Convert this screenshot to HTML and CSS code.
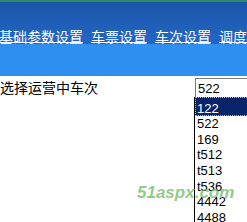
FILE: index.html
```html
<!DOCTYPE html>
<html lang="zh">
<head>
<meta charset="utf-8">
<link rel="stylesheet" href="styles.css">
</head>
<body>
<div class="page">
  <div class="topline"></div>
  <div class="header">
    <nav class="nav">
      <a href="#">基础参数设置</a>
      <a href="#">车票设置</a>
      <a href="#">车次设置</a>
      <a href="#">调度设置</a>
    </nav>
  </div>
  <div class="band"></div>
  <div class="content">
    <div class="label">选择运营中车次</div>
    <div class="select">
      <div class="combo">522</div>
      <ul class="listbox">
        <li class="selected">122</li>
        <li>522</li>
        <li>169</li>
        <li>t512</li>
        <li>t513</li>
        <li>t536</li>
        <li>4442</li>
        <li>4488</li>
      </ul>
    </div>
  </div>
  <div class="watermark">51aspx.com</div>
</div>
</body>
</html>
```

FILE: styles.css
```css
html, body {
  margin: 0;
  padding: 0;
  background: #ffffff;
  overflow: hidden;
}
.page {
  position: relative;
  width: 247px;
  height: 222px;
  overflow: hidden;
  font-family: "Noto Sans CJK SC", "Liberation Sans", sans-serif;
}
.topline {
  height: 2px;
  background: #2f8a6c;
}
.header {
  height: 42px;
  background: linear-gradient(#1b56a6, #1f5fb8 55%, #2266c6);
}
.nav {
  display: flex;
  gap: 8px;
  padding-top: 27px;
  margin-left: -1px;
  white-space: nowrap;
  font-size: 14px;
  line-height: 15px;
}
.nav a {
  color: #ffffff;
  text-decoration: underline;
  text-underline-offset: 0px;
}
.band {
  height: 32px;
  background: #2f8ff0;
}
.content {
  display: flex;
  padding-top: 2px;
}
.label {
  width: 195px;
  flex: none;
  font-size: 14px;
  line-height: 16px;
  padding-top: 1px;
  color: #000000;
}
.select {
  position: relative;
  flex: 1;
}
.combo {
  height: 19px;
  border-top: 1px solid #7b7b7b;
  border-left: 1px solid #7b7b7b;
  font-family: "Liberation Sans", Arial, sans-serif;
  font-size: 13px;
  line-height: 20px;
  padding-left: 2px;
  color: #000;
  width: 100px;
}
.listbox {
  position: absolute;
  left: -1px;
  top: 19px;
  width: 80px;
  margin: 0;
  padding: 0;
  list-style: none;
  border-left: 1px solid #000000;
  background: #ffffff;
  font-family: "Liberation Sans", Arial, sans-serif;
  font-size: 13px;
  line-height: 15.7px;
  color: #000;
}
.listbox li {
  padding-left: 2px;
  height: 15.7px;
}
.listbox li.selected {
  background: #0a246a;
  color: #ffffff;
  outline: 1px dotted #c8c080;
  outline-offset: -1px;
  height: 19px;
  line-height: 23px;
}
.watermark {
  position: absolute;
  left: 137px;
  top: 183px;
  font-family: "Liberation Sans", Arial, sans-serif;
  font-weight: bold;
  font-style: italic;
  font-size: 17px;
  color: rgba(110, 185, 95, 0.75);
  pointer-events: none;
}
```
